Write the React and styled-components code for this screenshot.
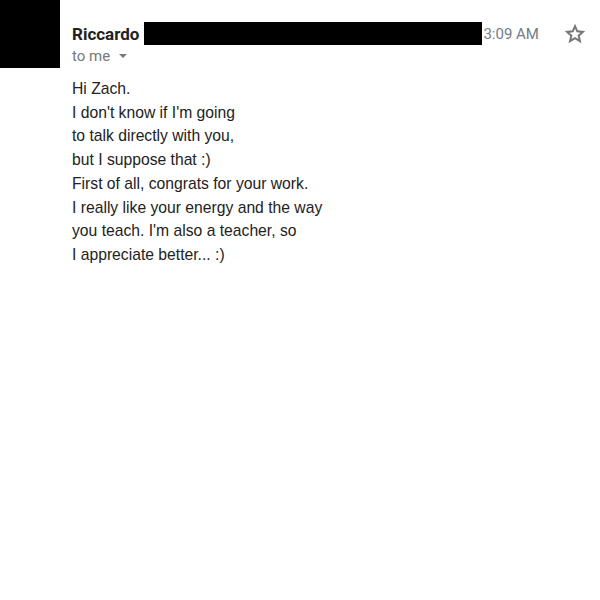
import React from 'react'
import styled, {createGlobalStyle} from "styled-components";

const GlobalStyle = createGlobalStyle`
    body {
        margin: 0;
        background: #fff;
        font-family: Roboto, "Liberation Sans", Arial, sans-serif;
    }
`;

const Message = styled.div`
    display: flex;
    width: 600px;
    height: 600px;
`;

const Avatar = styled.div`
    flex: 0 0 60px;
    height: 68px;
    background: #000;
`;

const Main = styled.div`
    flex: 1;
    padding-left: 12px;
    padding-right: 14px;
`;

const HeaderRow = styled.div`
    display: flex;
    align-items: center;
    height: 23px;
    margin-top: 22px;
`;

const Sender = styled.span`
    font-weight: bold;
    font-size: 17px;
    color: #222;
`;

const Redacted = styled.span`
    width: 338px;
    height: 23px;
    margin-left: 5px;
    background: #000;
`;

const Time = styled.span`
    margin-left: 1px;
    font-size: 15px;
    color: #6f7d8c;
`;

const Star = styled.span`
    margin-left: auto;
    display: flex;
    color: #777;
`;

const Recipient = styled.div`
    display: flex;
    align-items: center;
    gap: 6px;
    margin-top: 2px;
    font-size: 15px;
    color: #777;
`;

const Caret = styled.span`
    width: 0;
    height: 0;
    border-left: 4px solid transparent;
    border-right: 4px solid transparent;
    border-top: 4px solid #777;
    margin-left: 3px;
`;

const Body = styled.div`
    margin-top: 12px;
    font-family: "Liberation Sans", Arial, sans-serif;
    font-size: 15.7px;
    line-height: 23.7px;
    color: #222;
`;

const lines = [
    "Hi Zach.",
    "I don't know if I'm going",
    "to talk directly with you,",
    "but I suppose that :)",
    "First of all, congrats for your work.",
    "I really like your energy and the way",
    "you teach. I'm also a teacher, so",
    "I appreciate better... :)",
];

export default function App() {
    return (
        <>
            <GlobalStyle />
            <Message>
                <Avatar />
                <Main>
                    <HeaderRow>
                        <Sender>Riccardo</Sender>
                        <Redacted />
                        <Time>3:09 AM</Time>
                        <Star>
                            <svg width="22" height="22" viewBox="0 0 24 24" fill="none" stroke="currentColor" strokeWidth="2.2" strokeLinejoin="miter">
                                <path d="M12 3.5l2.5 5.6 6.1.6-4.6 4.1 1.4 6-5.4-3.2-5.4 3.2 1.4-6-4.6-4.1 6.1-.6z" />
                            </svg>
                        </Star>
                    </HeaderRow>
                    <Recipient>
                        to me <Caret />
                    </Recipient>
                    <Body>
                        {lines.map((l, i) => <div key={i}>{l}</div>)}
                    </Body>
                </Main>
            </Message>
        </>
    );
}
